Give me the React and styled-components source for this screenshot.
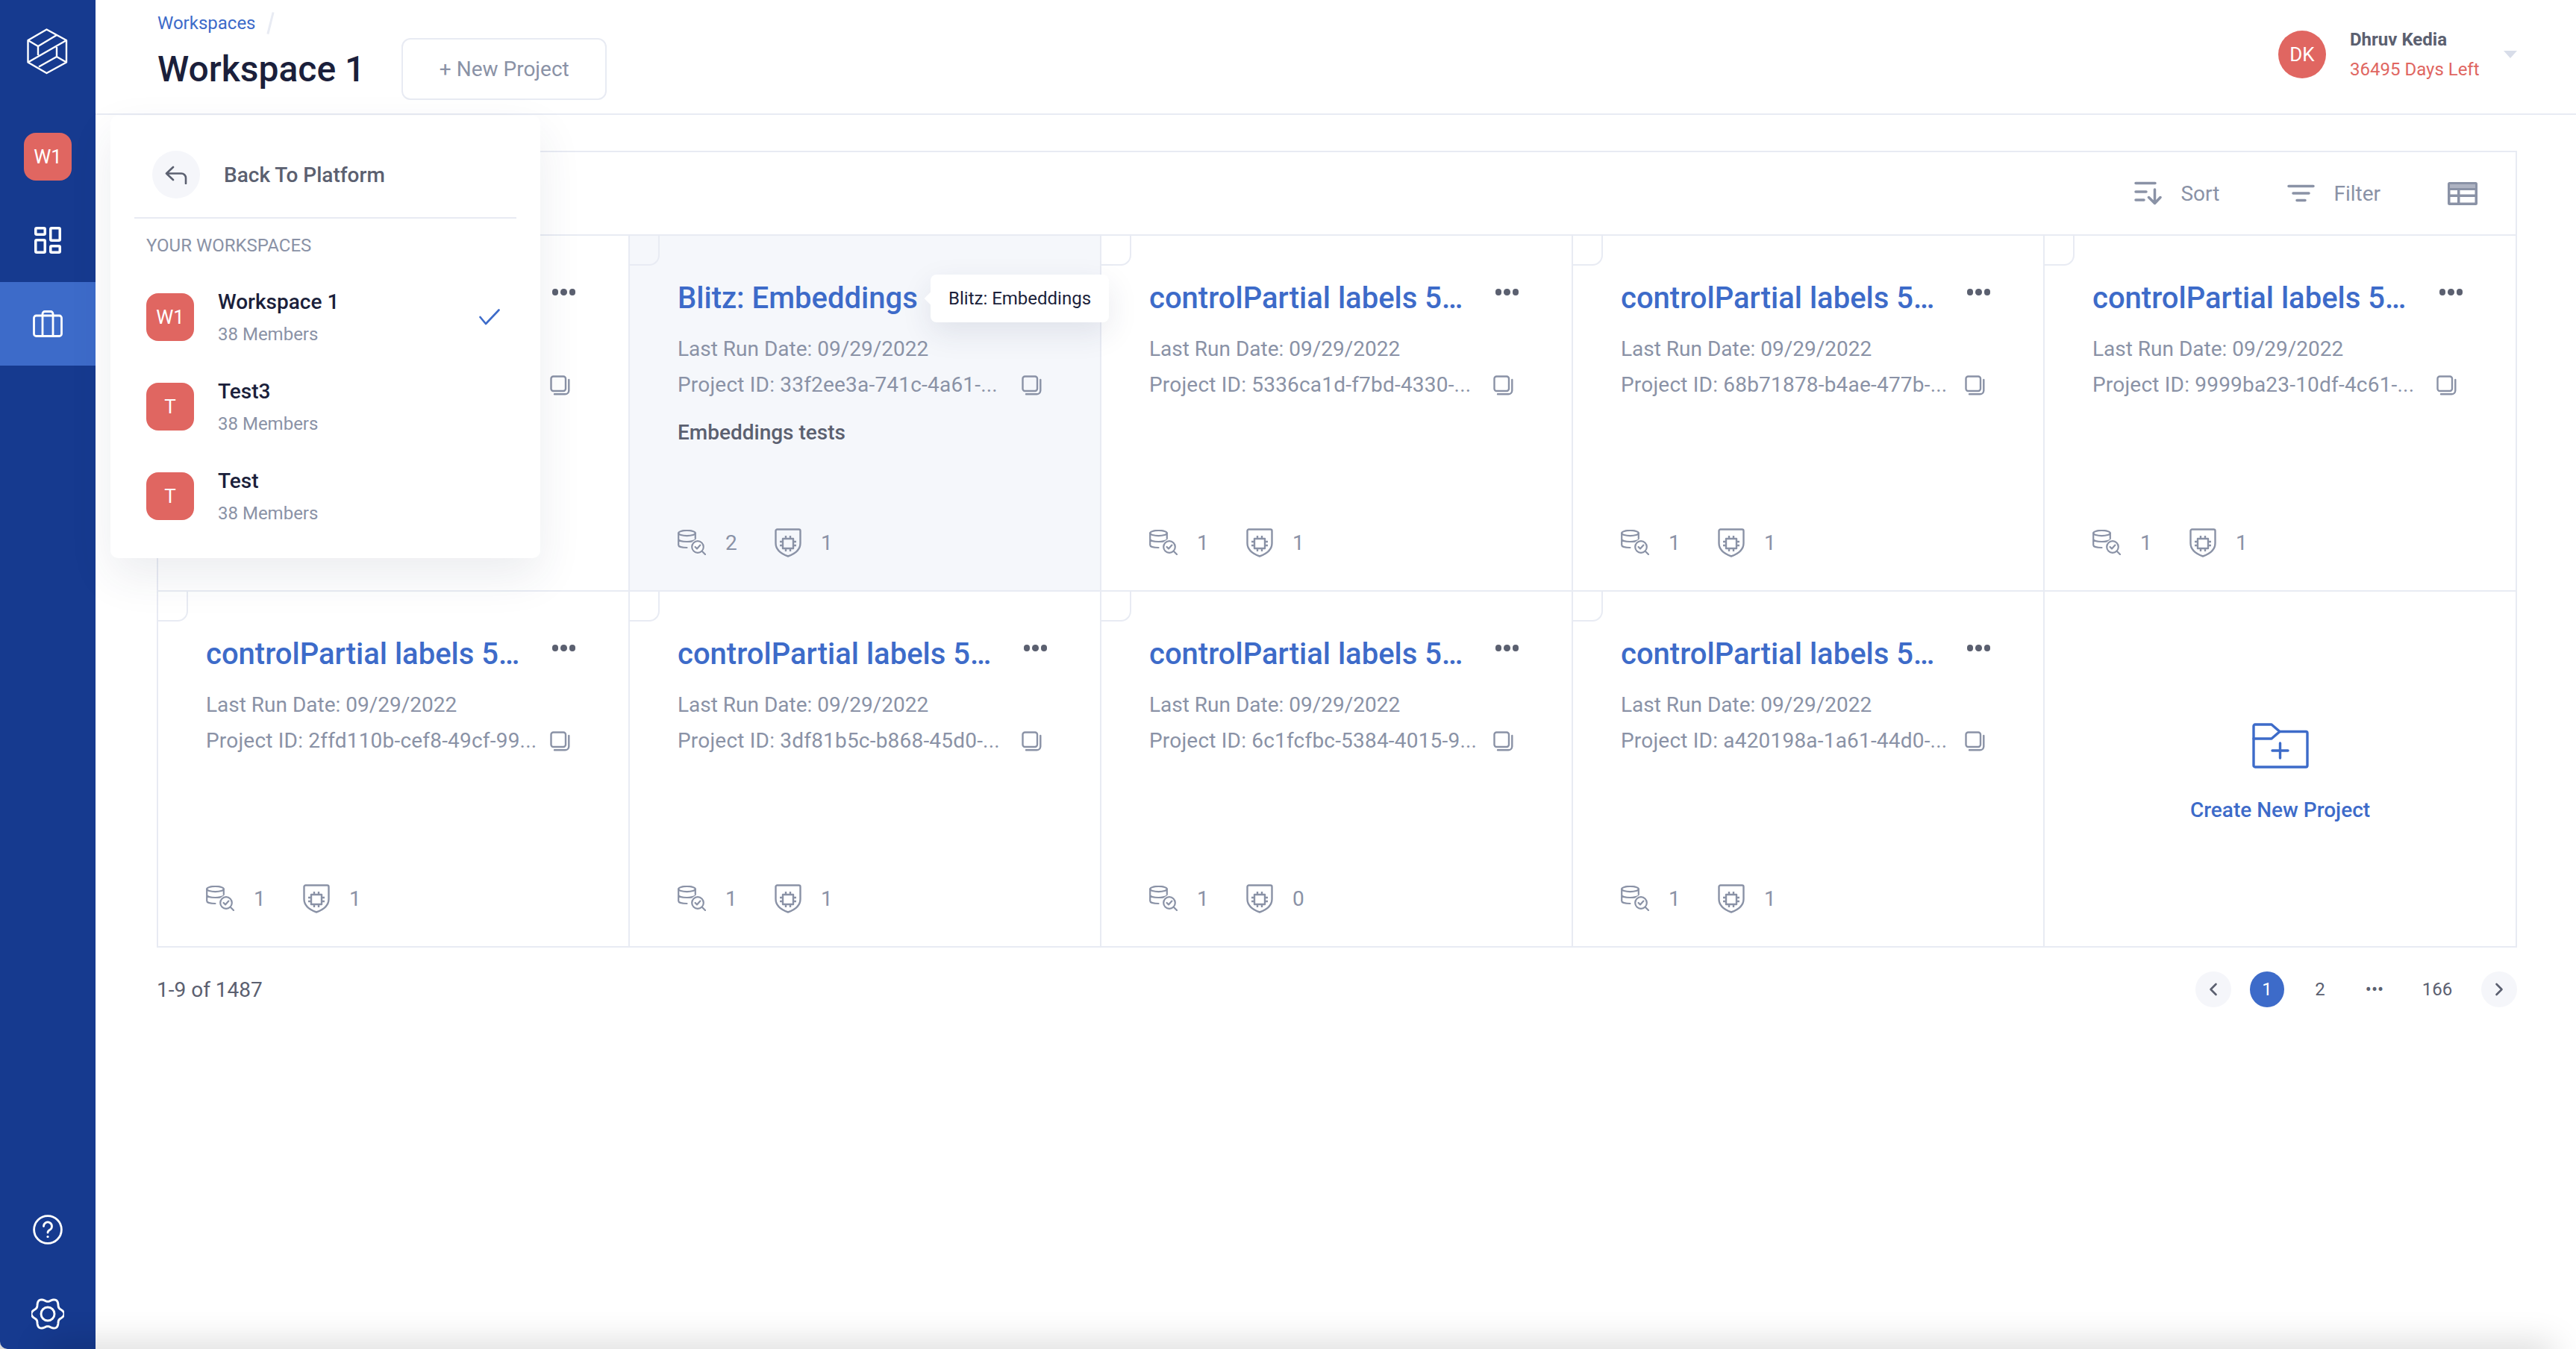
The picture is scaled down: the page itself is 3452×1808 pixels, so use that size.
import styled, { createGlobalStyle } from 'styled-components';

const GlobalStyle = createGlobalStyle`
    html, body {
        margin: 0;
        padding: 0;
        background: #fff;
    }
    body {
        font-family: Roboto, "Liberation Sans", sans-serif;
        color: #1b1f3b;
    }
    * {
        box-sizing: border-box;
    }
`

const Page = styled.div`
    position: relative;
    display: flex;
    width: 3452px;
    height: 1808px;
    overflow: hidden;
    background: #d9d9d9;
`

const Sidebar = styled.aside`
    display: flex;
    flex-direction: column;
    align-items: center;
    flex: 0 0 128px;
    background: #163a8f;
    border-bottom-left-radius: 10px;
    padding-top: 30px;
`

const SideAvatar = styled.div`
    width: 64px;
    height: 64px;
    margin: 68px 0 24px;
    border-radius: 16px;
    background: #e06661;
    color: #fff;
    font-size: 26px;
    display: flex;
    align-items: center;
    justify-content: center;
`

const SideItem = styled.div`
    width: 100%;
    height: 112px;
    display: flex;
    align-items: center;
    justify-content: center;
    background: ${p => (p.$active ? '#3d6bc9' : 'transparent')};
`

const SideBottom = styled.div`
    margin-top: auto;
    padding-bottom: 26px;
    display: flex;
    flex-direction: column;
    align-items: center;
    gap: 72px;
`

const Main = styled.main`
    position: relative;
    flex: 1;
    display: flex;
    flex-direction: column;
    background: #fff;

    &::after {
        content: '';
        position: absolute;
        left: -60px;
        right: 36px;
        bottom: -24px;
        height: 24px;
        box-shadow: 0 0 46px 6px rgba(0, 0, 0, 0.17);
    }
`

const Header = styled.header`
    flex: 0 0 154px;
    display: flex;
    justify-content: space-between;
    padding: 14px 79px 0 83px;
    border-bottom: 2px solid #e8ebf3;
`

const Breadcrumb = styled.div`
    display: flex;
    align-items: center;
    gap: 18px;
    height: 34px;
    font-size: 24px;
    color: #3d6bc9;
`

const Slash = styled.span`
    width: 2.5px;
    height: 30px;
    background: #e8ebf3;
    transform: rotate(14deg);
`

const TitleRow = styled.div`
    display: flex;
    align-items: center;
    gap: 49px;
    margin-top: 3px;
`

const PageTitle = styled.h1`
    margin: 0;
    font-size: 48px;
    line-height: 56px;
    font-weight: 500;
    color: #1b1f3b;
    white-space: nowrap;
`

const NewButton = styled.button`
    width: 275px;
    height: 83px;
    border: 2px solid #e8ebf3;
    border-radius: 12px;
    background: #fff;
    font: inherit;
    font-size: 28px;
    color: #8a92a6;
`

const UserBox = styled.div`
    display: flex;
    align-items: center;
    gap: 32px;
    align-self: flex-start;
    margin-top: 24px;
`

const UserAvatar = styled.div`
    width: 64px;
    height: 64px;
    border-radius: 50%;
    background: #e06661;
    color: #fff;
    font-size: 26px;
    display: flex;
    align-items: center;
    justify-content: center;
`

const UserText = styled.div`
    width: 174px;
    white-space: nowrap;
`

const UserName = styled.div`
    font-size: 24px;
    line-height: 30px;
    font-weight: 700;
    color: #5b6070;
`

const DaysLeft = styled.div`
    margin-top: 10px;
    font-size: 24px;
    line-height: 30px;
    color: #e06661;
`

const Caret = styled.div`
    width: 0;
    height: 0;
    border-left: 9px solid transparent;
    border-right: 9px solid transparent;
    border-top: 10px solid #d8dde9;
`

const Content = styled.div`
    padding: 48px 79px 0 82px;
`

const Board = styled.section`
    border: 2px solid #e8ebf3;
`

const Toolbar = styled.div`
    height: 112px;
    display: flex;
    align-items: center;
    justify-content: flex-end;
    padding-right: 51px;
    border-bottom: 2px solid #e8ebf3;
`

const ToolButton = styled.div`
    display: flex;
    align-items: center;
    gap: 25px;
    margin-right: ${p => p.$space}px;
    font-size: 28px;
    color: #8a92a6;
`

const Grid = styled.div`
    display: grid;
    grid-template-columns: repeat(4, 632px) 1fr;
    grid-template-rows: 477px 475px;
`

const Cell = styled.article`
    position: relative;
    display: flex;
    flex-direction: column;
    padding: 60px 71px 44px 64px;
    background: ${p => (p.$hover ? '#f5f7fb' : '#fff')};
    border-right: 2px solid #e8ebf3;
    border-bottom: 2px solid #e8ebf3;

    &:nth-child(5n) {
        border-right: none;
    }
    &:nth-child(n + 6) {
        border-bottom: none;
    }
    &::before {
        content: '';
        position: absolute;
        top: 0;
        left: 0;
        width: 38px;
        height: 38px;
        border-right: 2px solid #e8ebf3;
        border-bottom: 2px solid #e8ebf3;
        border-bottom-right-radius: 14px;
    }
`

const CardHead = styled.div`
    display: flex;
    justify-content: space-between;
    align-items: flex-start;
`

const CardTitle = styled.h3`
    margin: 0;
    min-height: 48px;
    font-size: 40px;
    line-height: 48px;
    font-weight: 500;
    color: #3d6bc9;
    white-space: nowrap;
`

const Dots = styled.div`
    display: flex;
    gap: 3px;
    margin-top: 11px;

    span {
        width: 8.5px;
        height: 8.5px;
        border-radius: 50%;
        background: #5b6070;
    }
`

const MetaLine = styled.div`
    display: flex;
    align-items: center;
    width: 488px;
    min-height: 36px;
    margin-top: ${p => p.$top}px;
    font-size: 28px;
    line-height: 36px;
    letter-spacing: ${p => p.$track || 0}px;
    color: #8a92a6;
    white-space: nowrap;
`

const CopySvg = styled.svg`
    flex: 0 0 27px;
    margin-left: auto;
`

const Description = styled.p`
    margin: 28px 0 0;
    font-size: 28px;
    line-height: 36px;
    font-weight: 500;
    color: #5b6070;
`

const CardFoot = styled.div`
    margin-top: auto;
    height: 40px;
    display: flex;
    align-items: center;
    font-size: 28px;
    color: #8a92a6;
`

const Count = styled.span`
    margin-left: 26px;
    width: 66px;
`

const Tooltip = styled.div`
    position: absolute;
    top: 52px;
    left: 403px;
    z-index: 3;
    width: 239px;
    height: 64px;
    padding-left: 24px;
    display: flex;
    align-items: center;
    background: #fff;
    border-radius: 8px;
    font-size: 24px;
    color: #1b1f3b;
    white-space: nowrap;
    box-shadow: 0 14px 40px rgba(40, 50, 90, 0.1);

    &::before {
        content: '';
        position: absolute;
        left: -6px;
        top: 26px;
        width: 12px;
        height: 12px;
        background: #fff;
        transform: rotate(45deg);
    }
`

const CreateCell = styled(Cell)`
    align-items: center;
    padding: 176px 0 0;

    &::before {
        display: none;
    }
`

const CreateLabel = styled.div`
    margin-top: 38px;
    font-size: 28px;
    line-height: 36px;
    font-weight: 500;
    color: #3d6bc9;
`

const Pagination = styled.div`
    display: flex;
    align-items: center;
    justify-content: space-between;
    margin-top: 32px;
    height: 48px;
`

const Total = styled.div`
    font-size: 28px;
    color: #5b6070;
`

const Pager = styled.div`
    display: flex;
    align-items: center;
    gap: 25px;
`

const PageItem = styled.div`
    min-width: ${p => p.$w || 46}px;
    height: 48px;
    display: flex;
    align-items: center;
    justify-content: center;
    border-radius: 50%;
    font-size: 24px;
    background: ${p => (p.$current ? '#3d6bc9' : p.$arrow ? '#f5f6fa' : 'transparent')};
    color: ${p => (p.$current ? '#fff' : '#5b6070')};
`

const Popup = styled.div`
    position: absolute;
    top: 155px;
    left: 148px;
    z-index: 5;
    width: 576px;
    height: 593px;
    padding-top: 47px;
    background: #fff;
    border-radius: 10px;
    box-shadow: 0 24px 60px rgba(40, 50, 90, 0.09);
`

const BackRow = styled.div`
    display: flex;
    align-items: center;
    gap: 32px;
    padding-left: 56px;
    font-size: 28px;
    font-weight: 500;
    color: #5b6070;
`

const BackCircle = styled.div`
    width: 64px;
    height: 64px;
    border-radius: 50%;
    background: #f5f6fa;
    display: flex;
    align-items: center;
    justify-content: center;
`

const Divider = styled.hr`
    margin: 25px 32px 0;
    height: 2px;
    border: none;
    background: #e8ebf3;
`

const SectionLabel = styled.div`
    margin-top: 21px;
    padding-left: 48px;
    font-size: 24px;
    line-height: 30px;
    color: #8a92a6;
`

const WorkspaceList = styled.div`
    display: flex;
    flex-direction: column;
    gap: 43px;
    margin-top: 42px;
    padding: 0 54px 0 48px;
`

const WorkspaceRow = styled.div`
    display: flex;
    align-items: center;
    gap: 32px;
`

const WorkspaceAvatar = styled(SideAvatar)`
    margin: 0;
    flex: 0 0 64px;
`

const WorkspaceInfo = styled.div`
    flex: 1;
`

const WorkspaceName = styled.div`
    margin-top: 2px;
    font-size: 28px;
    line-height: 34px;
    font-weight: 500;
    color: #1b1f3b;
`

const Members = styled.div`
    margin-top: 11px;
    font-size: 24px;
    line-height: 30px;
    color: #8a92a6;
`

const Logo = () => (
    <svg width="80" height="80" viewBox="0 0 80 80" fill="none" stroke="#fff" strokeWidth="2.4" strokeLinejoin="round">
        <path d="M38.5 9.5L65 24V53.5L38.5 68L13.5 53.5V24Z" />
        <path d="M13.5 24L27 32L52 17M27 32V44M13.5 53.5L65 24M52 33V46M65 53.5L52 46L28 59.5" />
    </svg>
)

const GridIcon = () => (
    <svg width="36" height="36" viewBox="0 0 36 36" fill="none" stroke="#fff" strokeWidth="3.5">
        <rect x="1.75" y="1.75" width="12.5" height="8.5" rx="1.5" />
        <rect x="1.75" y="17.75" width="12.5" height="16.5" rx="1.5" />
        <rect x="21.75" y="1.75" width="12.5" height="16.5" rx="1.5" />
        <rect x="21.75" y="25.75" width="12.5" height="8.5" rx="1.5" />
    </svg>
)

const CaseIcon = () => (
    <svg width="40" height="36" viewBox="0 0 40 36" fill="none" stroke="#fff" strokeWidth="2.8">
        <rect x="1.5" y="7" width="37" height="27.5" rx="3" />
        <path d="M13 7V34.5M27 7V34.5M13 7V4.5A3 3 0 0 1 16 1.5H24A3 3 0 0 1 27 4.5V7" />
    </svg>
)

const HelpIcon = () => (
    <svg width="40" height="40" viewBox="0 0 40 40" fill="none" stroke="#fff" strokeWidth="2.8" strokeLinecap="round">
        <circle cx="20" cy="20" r="18.4" />
        <path d="M14.5 15.5A5.5 5.5 0 1 1 22.8 20.2C20.8 21.3 20 22.2 20 24" />
        <circle cx="20" cy="29.5" r="1.6" fill="#fff" stroke="none" />
    </svg>
)

const gearPath = () => {
    const pts = []
    for (let i = 0; i < 120; i++) {
        const a = (i / 120) * Math.PI * 2
        const r = 19 + 2.4 * Math.cos(6 * a)
        pts.push(`${(22 + r * Math.cos(a) * 1.03).toFixed(2)} ${(21 + r * Math.sin(a)).toFixed(2)}`)
    }
    return `M${pts.join('L')}Z`
}

const GearIcon = () => (
    <svg width="44" height="42" viewBox="0 0 44 42" fill="none" stroke="#fff" strokeWidth="2.9">
        <path d={gearPath()} />
        <circle cx="22" cy="21" r="9" />
    </svg>
)

const SortIcon = () => (
    <svg width="37" height="32" viewBox="0 0 37 32" fill="none" stroke="#8a92a6" strokeWidth="3.5" strokeLinecap="round" strokeLinejoin="round">
        <path d="M2 2.5H28M2 14H16M2 25H13M27.5 11V29.5M19.5 21.5L27.5 29.5L35 21.5" />
    </svg>
)

const FilterIcon = () => (
    <svg width="37" height="24" viewBox="0 0 37 24" fill="none" stroke="#8a92a6" strokeWidth="3.5" strokeLinecap="round">
        <path d="M2 2.5H35M8 12H29M13 21.5H24" />
    </svg>
)

const TableIcon = () => (
    <svg width="40" height="31" viewBox="0 0 40 31">
        <rect width="40" height="31" rx="2.5" fill="#8a92a6" />
        <path d="M3 3H37V8H3Z" fill="#aeb3c2" />
        <path d="M3.5 11H13V16.5H3.5ZM16.5 11H36.5V16.5H16.5ZM3.5 20H13V27.5H3.5ZM16.5 20H36.5V27.5H16.5Z" fill="#fff" />
    </svg>
)

const CopyIcon = () => (
    <CopySvg width="27" height="27" viewBox="0 0 27 27" fill="none" stroke="#8a92a6" strokeWidth="2.4" strokeLinecap="round">
        <rect x="1.5" y="1.5" width="19.5" height="19.5" rx="3" />
        <path d="M25.3 6V20.5A5 5 0 0 1 20.3 25.3H6" />
    </CopySvg>
)

const DataIcon = () => (
    <svg width="38" height="34" viewBox="0 0 38 34" fill="none" stroke="#8a92a6" strokeWidth="2.2" strokeLinecap="round" strokeLinejoin="round">
        <ellipse cx="12.5" cy="4.5" rx="11.3" ry="3.6" />
        <path d="M1.2 4.5V20.5C1.2 22.5 6 24 12.5 24M1.2 12.5C1.2 14.5 6 16 12.5 16C17 16 21 15.3 23 14M23.8 4.5V12" />
        <circle cx="27" cy="23" r="10" fill="#fff" stroke="none" />
        <circle cx="27" cy="23" r="7.8" />
        <path d="M23.6 23L26 25.4L30.4 20.6M33 29L37 33" />
    </svg>
)

const ShieldIcon = () => (
    <svg width="36" height="39" viewBox="0 0 36 39" fill="none" stroke="#8a92a6" strokeWidth="2.4" strokeLinejoin="round">
        <path d="M1.5 3.5C1.5 2.5 2.5 1.5 3.5 1.5H32.5C33.5 1.5 34.5 2.5 34.5 3.5V20C34.5 29 26.5 34.5 18 37.5C9.5 34.5 1.5 29 1.5 20Z" />
        <rect x="11" y="14" width="14" height="13" />
        <path d="M15 10V14M21 10V14M15 27V31M21 27V31M7 18H11M7 23H11M25 18H29M25 23H29" />
    </svg>
)

const FolderIcon = () => (
    <svg width="76" height="61" viewBox="0 0 76 61" fill="none" stroke="#3d6bc9" strokeWidth="3.4" strokeLinejoin="round" strokeLinecap="round">
        <path d="M2 4A2 2 0 0 1 4 2H26L37 11.5H72A2 2 0 0 1 74 13.5V57A2 2 0 0 1 72 59H4A2 2 0 0 1 2 57Z" />
        <path d="M2 21H26L37 11.5M37.5 27V47M27 37H48" />
    </svg>
)

const BackIcon = () => (
    <svg width="30" height="25" viewBox="0 0 30 25" fill="none" stroke="#5b6070" strokeWidth="2.6" strokeLinecap="round" strokeLinejoin="round">
        <path d="M11 2L2 10.5L11 19M2 10.5H22A6 6 0 0 1 28 16.5V24" />
    </svg>
)

const CheckIcon = () => (
    <svg width="28" height="22" viewBox="0 0 28 22" fill="none" stroke="#3d6bc9" strokeWidth="2.6" strokeLinecap="round" strokeLinejoin="round">
        <path d="M1.5 11L9 20L26.5 1.5" />
    </svg>
)

const ChevronIcon = ({ left }) => (
    <svg width="12" height="18" viewBox="0 0 12 18" fill="none" stroke="#5b6070" strokeWidth="2.6" strokeLinecap="round" strokeLinejoin="round">
        <path d={left ? 'M9.5 2L2.5 9L9.5 16' : 'M2.5 2L9.5 9L2.5 16'} />
    </svg>
)

const LONG_TITLE = 'controlPartial labels 5…'

// first card sits under the workspace menu, only its dots and copy icon show
const projects = [
    { covered: true },
    { title: 'Blitz: Embeddings', id: '33f2ee3a-741c-4a61-...', data: 2, models: 1, hover: true, desc: 'Embeddings tests' },
    { title: LONG_TITLE, id: '5336ca1d-f7bd-4330-...', data: 1, models: 1 },
    { title: LONG_TITLE, id: '68b71878-b4ae-477b-...', data: 1, models: 1 },
    { title: LONG_TITLE, id: '9999ba23-10df-4c61-...', data: 1, models: 1 },
    { title: LONG_TITLE, id: '2ffd110b-cef8-49cf-99...', data: 1, models: 1 },
    { title: LONG_TITLE, id: '3df81b5c-b868-45d0-...', data: 1, models: 1 },
    { title: LONG_TITLE, id: '6c1fcfbc-5384-4015-9...', data: 1, models: 0 },
    { title: LONG_TITLE, id: 'a420198a-1a61-44d0-...', data: 1, models: 1 },
]

const workspaces = [
    { short: 'W1', name: 'Workspace 1', selected: true },
    { short: 'T', name: 'Test3' },
    { short: 'T', name: 'Test' },
]

const ProjectCard = ({ project }) => (
    <Cell $hover={project.hover}>
        <CardHead>
            <CardTitle>{project.title}</CardTitle>
            {!project.hover && <Dots><span /><span /><span /></Dots>}
        </CardHead>
        <MetaLine $top={26}>{!project.covered && 'Last Run Date: 09/29/2022'}</MetaLine>
        <MetaLine $top={12} $track={0.2}>
            {!project.covered && `Project ID: ${project.id}`}
            <CopyIcon />
        </MetaLine>
        {project.desc && <Description>{project.desc}</Description>}
        {!project.covered && (
            <CardFoot>
                <DataIcon />
                <Count>{project.data}</Count>
                <ShieldIcon />
                <Count>{project.models}</Count>
            </CardFoot>
        )}
        {project.hover && <Tooltip>{project.title}</Tooltip>}
    </Cell>
)

const App = () => {
    return (
        <Page>
            <GlobalStyle />
            <Sidebar>
                <Logo />
                <SideAvatar>W1</SideAvatar>
                <SideItem><GridIcon /></SideItem>
                <SideItem $active><CaseIcon /></SideItem>
                <SideBottom>
                    <HelpIcon />
                    <GearIcon />
                </SideBottom>
            </Sidebar>

            <Main>
                <Header>
                    <div>
                        <Breadcrumb>Workspaces<Slash /></Breadcrumb>
                        <TitleRow>
                            <PageTitle>Workspace 1</PageTitle>
                            <NewButton>+ New Project</NewButton>
                        </TitleRow>
                    </div>
                    <UserBox>
                        <UserAvatar>DK</UserAvatar>
                        <UserText>
                            <UserName>Dhruv Kedia</UserName>
                            <DaysLeft>36495 Days Left</DaysLeft>
                        </UserText>
                        <Caret />
                    </UserBox>
                </Header>

                <Content>
                    <Board>
                        <Toolbar>
                            <ToolButton $space={91}><SortIcon />Sort</ToolButton>
                            <ToolButton $space={90}><FilterIcon />Filter</ToolButton>
                            <TableIcon />
                        </Toolbar>
                        <Grid>
                            {projects.map((p, i) => <ProjectCard key={i} project={p} />)}
                            <CreateCell>
                                <FolderIcon />
                                <CreateLabel>Create New Project</CreateLabel>
                            </CreateCell>
                        </Grid>
                    </Board>
                    <Pagination>
                        <Total>1-9 of 1487</Total>
                        <Pager>
                            <PageItem $arrow $w={48}><ChevronIcon left /></PageItem>
                            <PageItem $current>1</PageItem>
                            <PageItem>2</PageItem>
                            <PageItem $w={50}>•••</PageItem>
                            <PageItem $w={68}>166</PageItem>
                            <PageItem $arrow $w={48}><ChevronIcon /></PageItem>
                        </Pager>
                    </Pagination>
                </Content>
            </Main>

            <Popup>
                <BackRow>
                    <BackCircle><BackIcon /></BackCircle>
                    Back To Platform
                </BackRow>
                <Divider />
                <SectionLabel>YOUR WORKSPACES</SectionLabel>
                <WorkspaceList>
                    {workspaces.map(w => (
                        <WorkspaceRow key={w.name}>
                            <WorkspaceAvatar>{w.short}</WorkspaceAvatar>
                            <WorkspaceInfo>
                                <WorkspaceName>{w.name}</WorkspaceName>
                                <Members>38 Members</Members>
                            </WorkspaceInfo>
                            {w.selected && <CheckIcon />}
                        </WorkspaceRow>
                    ))}
                </WorkspaceList>
            </Popup>
        </Page>
    );
};

export default App;
